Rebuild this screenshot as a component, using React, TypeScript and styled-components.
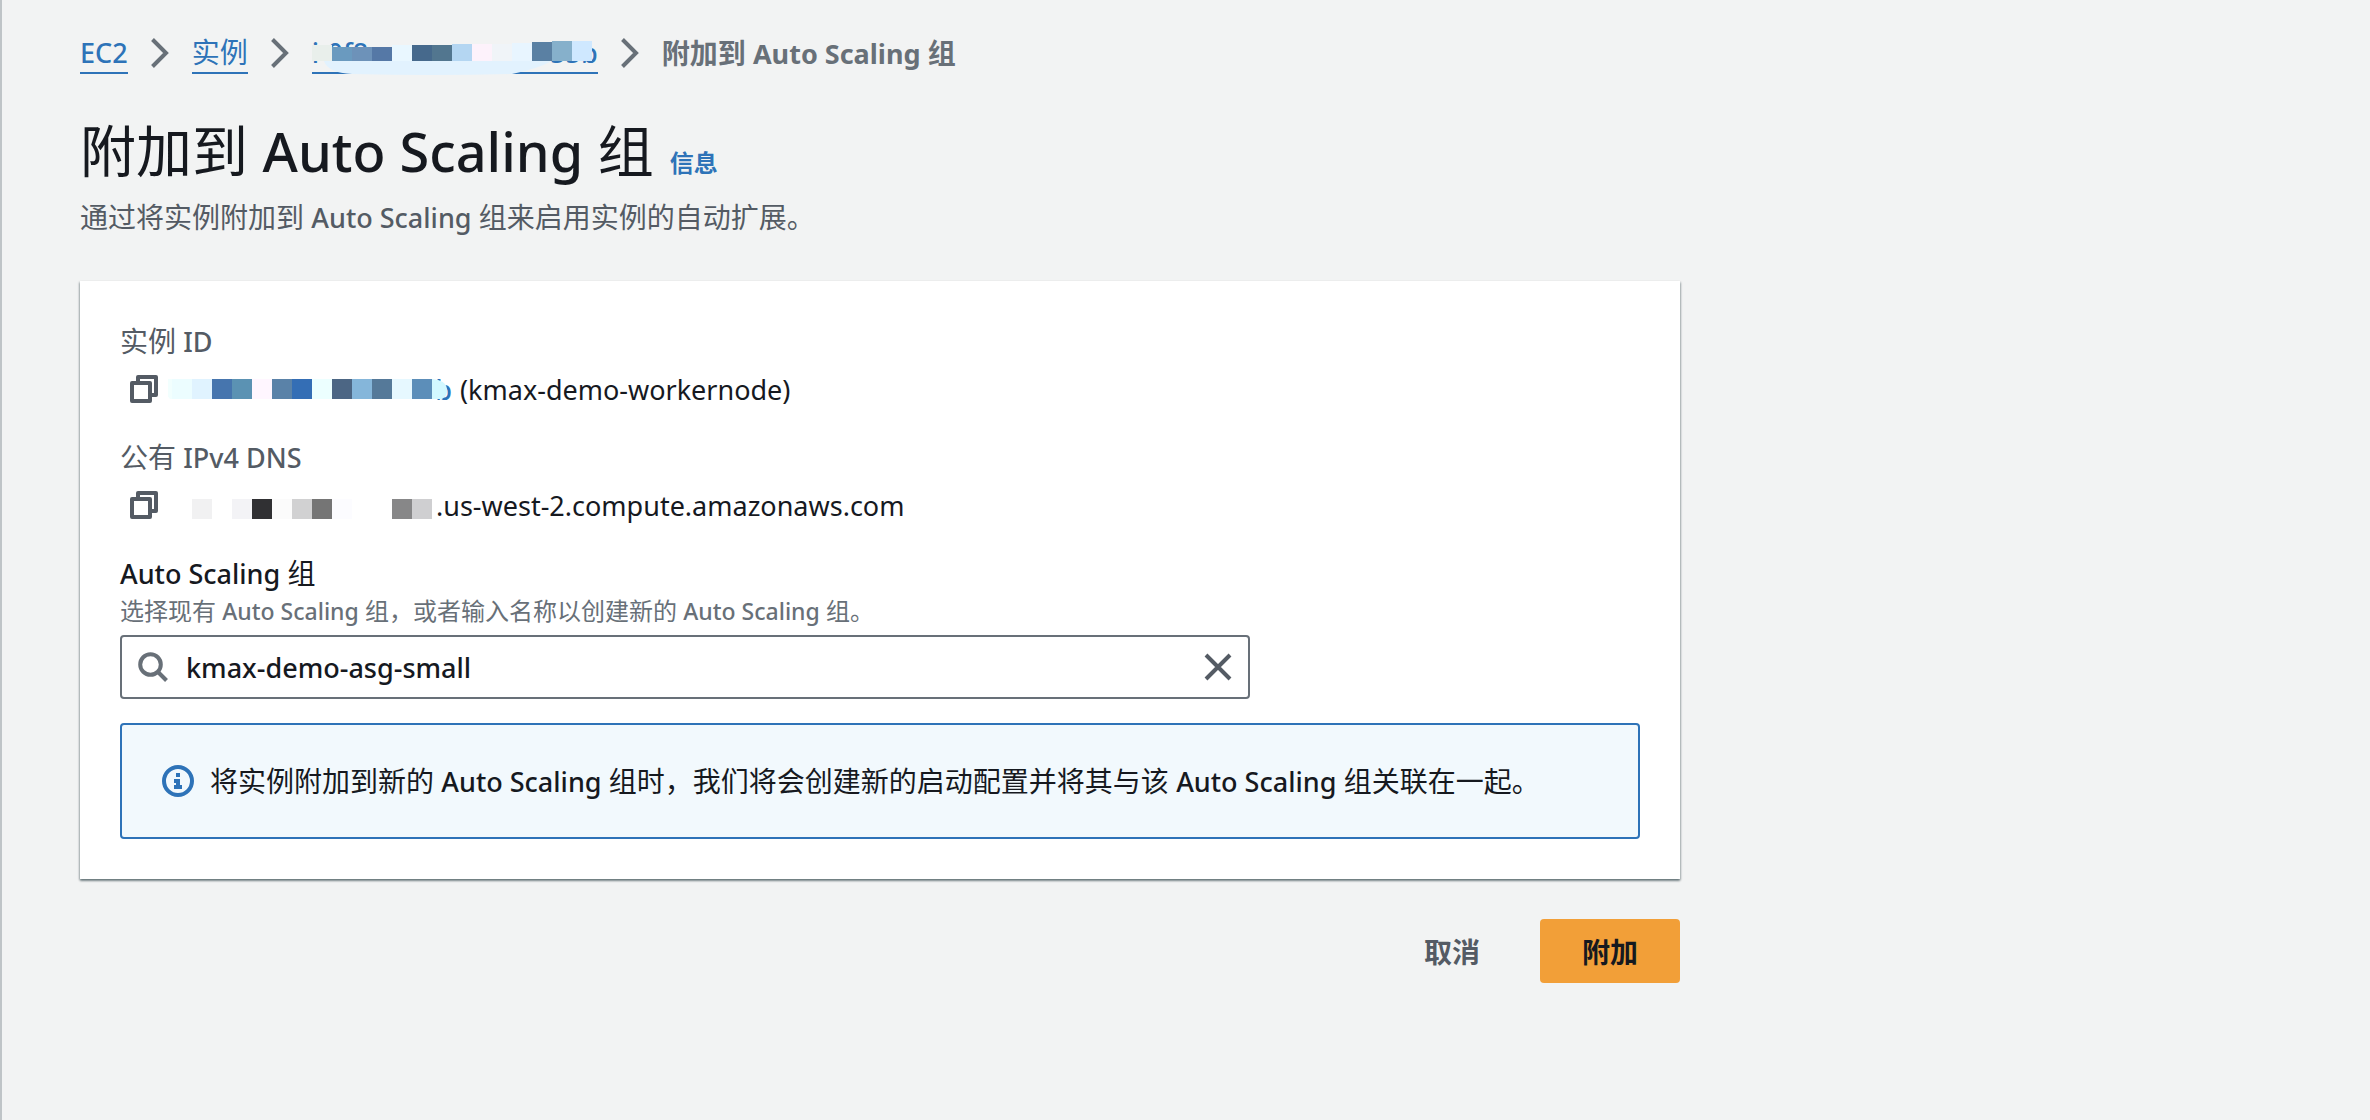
import React from 'react';
import styled, { createGlobalStyle } from 'styled-components';

const Global = createGlobalStyle`
  *, *::before, *::after { box-sizing: border-box; }
  body {
    margin: 0;
    background: #f2f3f3;
    color: #16191f;
    font-family: 'Noto Sans', 'Noto Sans CJK SC', sans-serif;
    font-size: 28px;
    line-height: 44px;
  }
`;

const Page = styled.div`
  min-height: 100vh;
  padding: 32px 78px;
  border-left: 2px solid #bfc4c7;
`;

const Content = styled.main`
  max-width: 1600px;
`;

/* Latin glyphs run wide and thin beside Han characters, so they are set slightly smaller and heavier. */
const Latin = styled.span<{ $size?: number; $weight?: number }>`
  font-size: ${(p) => p.$size ?? 27}px;
  font-weight: ${(p) => p.$weight ?? 500};
  line-height: 1;
`;

const Crumbs = styled.ol`
  display: flex;
  align-items: center;
  gap: 23px;
  margin: 0;
  padding: 0;
  list-style: none;
  height: 42px;
`;

const Crumb = styled.li`
  display: flex;
  align-items: center;
  gap: 23px;
  white-space: nowrap;
`;

const CrumbLink = styled.a<{ $masked?: boolean }>`
  position: relative;
  display: flex;
  align-items: center;
  justify-content: space-between;
  width: ${(p) => (p.$masked ? '286px' : 'auto')};
  height: 41px;
  color: #2e73b8;
  text-decoration: none;
  border-bottom: 2px solid #2e73b8;
`;

const Current = styled.span`
  color: #687078;
  font-weight: 700;
`;

const Mask = styled.svg`
  position: absolute;
  left: 0;
  top: 0;
`;

const TitleRow = styled.div`
  display: flex;
  align-items: baseline;
  gap: 16px;
  margin-top: 40px;
`;

const Title = styled.h1`
  margin: 0;
  font-size: 56px;
  line-height: 72px;
  font-weight: 400;
`;

const InfoLink = styled.a`
  color: #2e73b8;
  font-size: 24px;
  line-height: 36px;
  font-weight: 700;
  text-decoration: none;
`;

const Lead = styled.p`
  margin: 9px 0 42px;
  color: #545b64;
`;

const Card = styled.section`
  padding: 40px;
  background: #fff;
  box-shadow: 0 2px 2px rgba(0, 28, 36, 0.4), 1px 1px 2px rgba(0, 28, 36, 0.2),
    -1px 1px 2px rgba(0, 28, 36, 0.2);
`;

const Details = styled.dl`
  margin: 0;
  display: grid;
  gap: 24px;
`;

const Term = styled.dt`
  margin-bottom: 4px;
  color: #545b64;
  line-height: 40px;
`;

const Value = styled.dd`
  margin: 0;
  display: flex;
  align-items: center;
  height: 48px;
`;

const IconButton = styled.button`
  display: flex;
  align-items: center;
  justify-content: center;
  padding: 0;
  border: 0;
  background: none;
  color: #545b64;
  cursor: pointer;
`;

const CopyButton = styled(IconButton)`
  width: 48px;
  height: 48px;
`;

const ValueLink = styled.a`
  position: relative;
  display: flex;
  align-items: center;
  justify-content: flex-end;
  width: 284px;
  height: 44px;
  margin-right: 8px;
  color: #2e73b8;
  text-decoration: none;
`;

const Hidden = styled.span`
  position: relative;
  width: 268px;
  height: 44px;
`;

const Field = styled.div`
  display: flex;
  flex-direction: column;
  width: calc(75% - 10px);
  margin-top: 24px;
`;

const Label = styled.label`
  line-height: 40px;
`;

const Hint = styled.span`
  margin-bottom: 6px;
  color: #687078;
  font-size: 24px;
  line-height: 36px;
`;

const SearchBox = styled.div`
  display: flex;
  align-items: center;
  height: 64px;
  padding: 0 16px;
  border: 2px solid #687078;
  border-radius: 4px;
  background: #fff;
  color: #687078;
`;

const SearchInput = styled.input`
  flex: 1;
  min-width: 0;
  margin: 0 18px;
  padding: 0;
  border: 0;
  outline: 0;
  background: none;
  color: #16191f;
  font-family: inherit;
  font-size: 27px;
  font-weight: 500;
`;

const Alert = styled.div`
  display: flex;
  align-items: center;
  gap: 16px;
  margin-top: 24px;
  padding: 34px 40px;
  border: 2px solid #2e73b8;
  border-radius: 4px;
  background: #f2f9fd;
`;

const Actions = styled.div`
  display: flex;
  justify-content: flex-end;
  gap: 18px;
  margin-top: 40px;
`;

const Button = styled.button<{ $primary?: boolean }>`
  height: 64px;
  padding: 0 42px;
  border: 0;
  border-radius: 4px;
  background: ${(p) => (p.$primary ? '#f29f38' : 'transparent')};
  color: ${(p) => (p.$primary ? '#16191f' : '#545b64')};
  font-family: inherit;
  font-size: 28px;
  font-weight: 700;
  cursor: pointer;
`;

const Chevron = () => (
  <svg width="18" height="30" viewBox="0 0 18 30" fill="none" stroke="#687078" strokeWidth="4" aria-hidden="true">
    <path d="M1.5 1.5 15 15 1.5 28.5" />
  </svg>
);

const CopyIcon = () => (
  <svg width="28" height="28" viewBox="0 0 28 28" fill="none" stroke="currentColor" strokeWidth="4" strokeLinejoin="round" aria-hidden="true">
    <path d="M2 8h18v18H2z" />
    <path d="M8 8V2h18v18h-6" />
  </svg>
);

const SearchIcon = () => (
  <svg width="30" height="30" viewBox="0 0 30 30" fill="none" stroke="currentColor" strokeWidth="4" aria-hidden="true">
    <circle cx="12.500" cy="12.500" r="10.300" />
    <path d="M19.500 19.500 28.500 28.500" />
  </svg>
);

const CloseIcon = () => (
  <svg width="28" height="28" viewBox="0 0 28 28" fill="none" stroke="#545b64" strokeWidth="4" aria-hidden="true">
    <path d="M2 2 26 26M26 2 2 26" />
  </svg>
);

const InfoIcon = () => (
  <svg width="32" height="32" viewBox="0 0 32 32" fill="none" aria-hidden="true">
    <circle cx="16" cy="16" r="14" stroke="#2e73b8" strokeWidth="4" />
    <path fill="#2e73b8" d="M14 8h4v4h-4zM12 14h6v6h2v4h-8v-4h2v-2h-2z" />
  </svg>
);

type Cell = [x: number, color: string, top?: number];

const Cells = ({ cells, top, bottom }: { cells: Cell[]; top: number; bottom: number }) => (
  <>
    {cells.map(([x, color, own]) => (
      <rect key={x} x={x} y={own ?? top} width={20} height={bottom - (own ?? top)} fill={color} />
    ))}
  </>
);

const crumbCells: Cell[] = [
  [0, '#e9efeb'], [20, '#6a9abf', 14], [40, '#6d92b9', 14], [60, '#5578a6', 14], [80, '#e9f7ff'],
  [100, '#46698c'], [120, '#52768f'], [140, '#b4d6f2', 11], [160, '#fdf2fb', 11], [180, '#f0f4f8', 11],
  [200, '#e8f5ff', 10], [220, '#5a80a3', 9], [240, '#86b0cb', 8], [260, '#cfe8ff', 8],
];

const idCells: Cell[] = [
  [4, '#ecfdff'], [24, '#e0f3ff'], [44, '#4675ae'], [64, '#5b92b3'], [84, '#fff6ff'],
  [104, '#5a82a8'], [124, '#346eb5'], [144, '#ecffff'], [164, '#4c6684'], [184, '#85b6da'],
  [204, '#557999'], [224, '#e6f8ff'], [244, '#5c8eb9'],
];

const dnsCells: Cell[] = [
  [24, '#f1f1f2'], [64, '#f3f3f6'], [84, '#303033'], [104, '#fbfbfb'],
  [124, '#d1d1d2'], [144, '#757575'], [164, '#fcfcff'], [224, '#878788'], [244, '#cfcfd1'],
];

export default function App() {
  return (
    <>
      <Global />
      <Page>
        <Content>
          <nav aria-label="导航路径">
            <Crumbs>
              <Crumb>
                <CrumbLink href="#"><Latin>EC2</Latin></CrumbLink>
                <Chevron />
              </Crumb>
              <Crumb>
                <CrumbLink href="#">实例</CrumbLink>
                <Chevron />
              </Crumb>
              <Crumb>
                <CrumbLink href="#" $masked>
                  <Latin>i-0f8</Latin>
                  <Latin>55b</Latin>
                  <Mask width="286" height="42" viewBox="0 0 286 42" aria-hidden="true">
                    <path fill="#e2f2fe" d="M10 28H240Q225 36 200 41Q120 43 40 41Q16 40 12 28Z" />
                    <Cells cells={crumbCells} top={12} bottom={28} />
                  </Mask>
                </CrumbLink>
                <Chevron />
              </Crumb>
              <Crumb>
                <Current aria-current="page">附加到 <Latin $weight={700}>Auto Scaling</Latin> 组</Current>
              </Crumb>
            </Crumbs>
          </nav>

          <TitleRow>
            <Title>附加到 <Latin $size={54}>Auto Scaling</Latin> 组</Title>
            <InfoLink href="#">信息</InfoLink>
          </TitleRow>
          <Lead>通过将实例附加到 <Latin>Auto Scaling</Latin> 组来启用实例的自动扩展。</Lead>

          <Card>
            <Details>
              <div>
                <Term>实例 <Latin>ID</Latin></Term>
                <Value>
                  <CopyButton type="button" aria-label="复制实例 ID"><CopyIcon /></CopyButton>
                  <ValueLink href="#">
                    <Latin>b</Latin>
                    <Mask width="284" height="44" viewBox="0 0 284 44" aria-hidden="true">
                      <path fill="#f2fffe" d="M4 12H0Q-4 26 2 32H4Z" />
                      <Cells cells={idCells} top={12} bottom={32} />
                      <path fill="#d2f8ff" d="M264 12Q278 13 279 22Q280 29 274 32H264Z" />
                    </Mask>
                  </ValueLink>
                  <Latin $weight={400}>(kmax-demo-workernode)</Latin>
                </Value>
              </div>
              <div>
                <Term>公有 <Latin>IPv4 DNS</Latin></Term>
                <Value>
                  <CopyButton type="button" aria-label="复制公有 IPv4 DNS"><CopyIcon /></CopyButton>
                  <Hidden>
                    <Mask width="268" height="44" viewBox="0 0 268 44" aria-hidden="true">
                      <Cells cells={dnsCells} top={16} bottom={36} />
                    </Mask>
                  </Hidden>
                  <Latin $weight={400}>.us-west-2.compute.amazonaws.com</Latin>
                </Value>
              </div>
            </Details>

            <Field>
              <Label htmlFor="asg"><Latin>Auto Scaling</Latin> 组</Label>
              <Hint id="asg-hint">
                选择现有 <Latin $size={23}>Auto Scaling</Latin> 组，或者输入名称以创建新的 <Latin $size={23}>Auto Scaling</Latin> 组。
              </Hint>
              <SearchBox>
                <SearchIcon />
                <SearchInput id="asg" type="text" aria-describedby="asg-hint" defaultValue="kmax-demo-asg-small" />
                <IconButton type="button" aria-label="清除"><CloseIcon /></IconButton>
              </SearchBox>
            </Field>

            <Alert role="status">
              <InfoIcon />
              <span>
                将实例附加到新的 <Latin>Auto Scaling</Latin> 组时，我们将会创建新的启动配置并将其与该 <Latin>Auto Scaling</Latin> 组关联在一起。
              </span>
            </Alert>
          </Card>

          <Actions>
            <Button type="button">取消</Button>
            <Button type="button" $primary>附加</Button>
          </Actions>
        </Content>
      </Page>
    </>
  );
}
